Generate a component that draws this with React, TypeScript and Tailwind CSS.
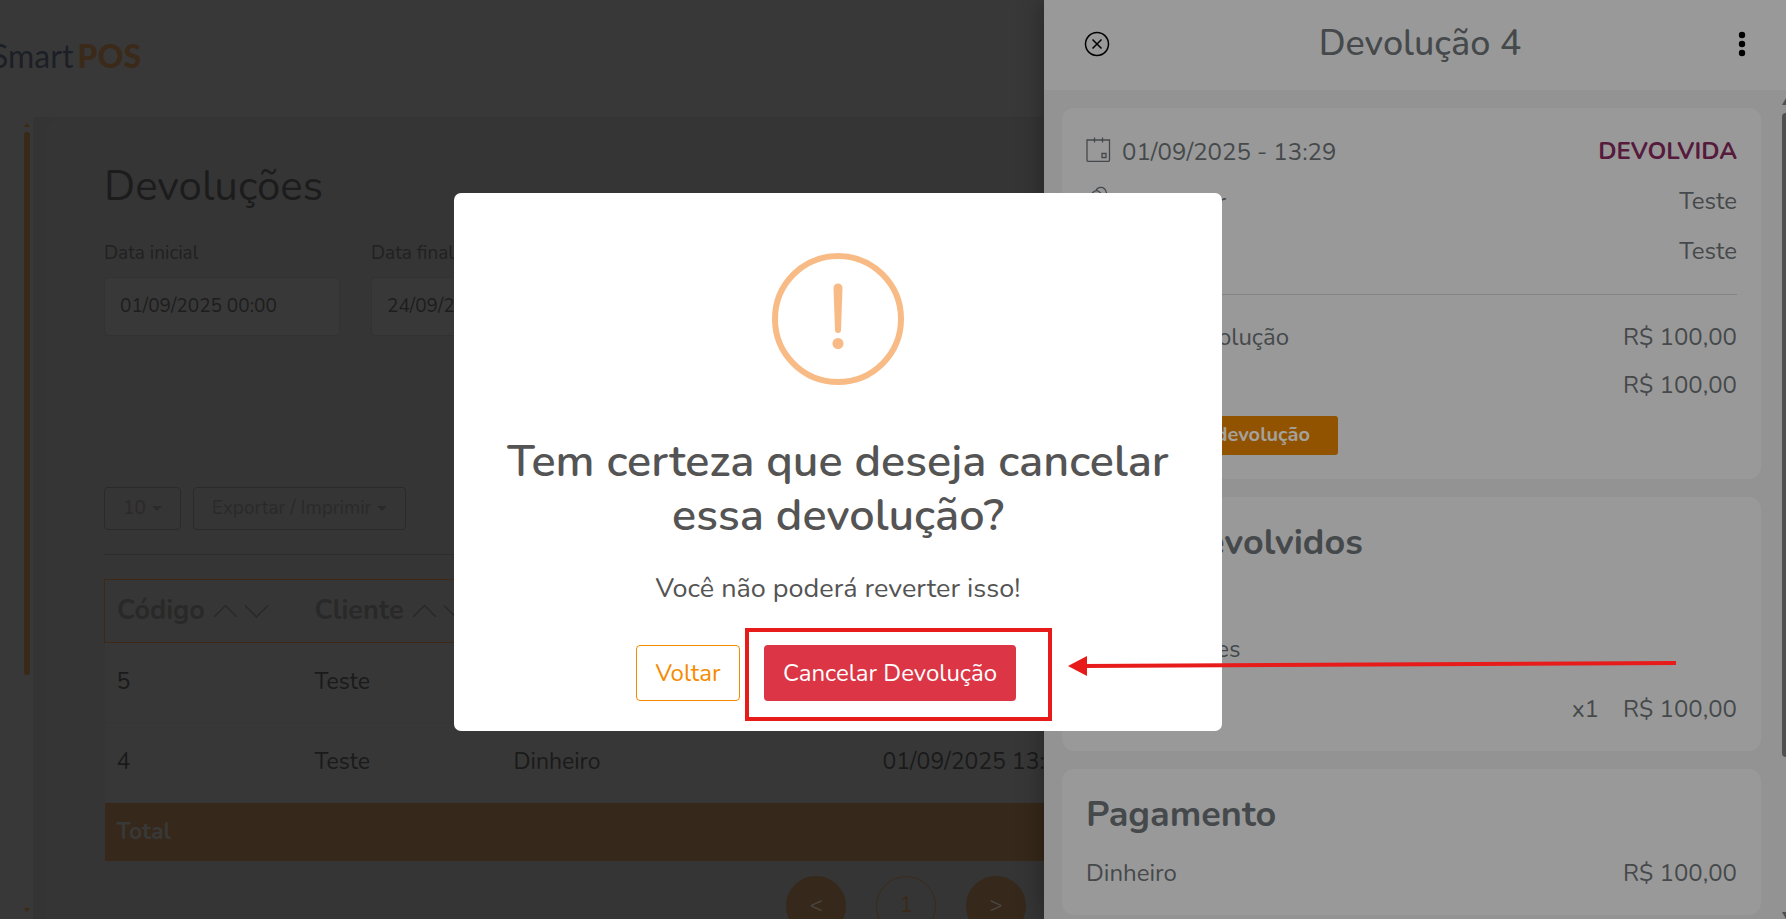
import type { ReactNode } from "react"

type Sale = {
    code: string
    client: string
    payment: string
    date: string
}

const sales: Sale[] = [
    { code: "5", client: "Teste", payment: "Dinheiro", date: "01/09/2025 13:32" },
    { code: "4", client: "Teste", payment: "Dinheiro", date: "01/09/2025 13:29" },
]

function SortArrows() {
    return (
        <svg width="56" height="14" viewBox="0 0 56 14" fill="none" stroke="currentColor" strokeWidth="1.5" className="shrink-0">
            <path d="M1 13 12.500 1.500 24 13" />
            <path d="M32 1.500 43.500 13 55 1.500" />
        </svg>
    )
}

function Caret() {
    return <span className="h-0 w-0 border-x-5 border-t-5 border-x-transparent border-t-[#2a2a2a]" />
}

function CloseIcon() {
    return (
        <svg width="26" height="26" viewBox="0 0 26 26" fill="none" stroke="#000" strokeWidth="1.500">
            <circle cx="13" cy="13" r="11.500" />
            <path d="M8.500 8.500l9 9M17.500 8.500l-9 9" />
        </svg>
    )
}

function DotsIcon() {
    return (
        <svg width="8" height="26" viewBox="0 0 8 26" fill="#000">
            <circle cx="4" cy="4" r="3.200" />
            <circle cx="4" cy="13" r="3.200" />
            <circle cx="4" cy="22" r="3.200" />
        </svg>
    )
}

function CalendarIcon() {
    return (
        <svg width="25" height="27" viewBox="0 0 25 27" fill="none" stroke="#45494b" strokeWidth="1.300">
            <path d="M1 5h22.500v20q0 1.500-1.500 1.500H2.500Q1 26.500 1 25zM8.500 2.500v5M16.500 2.500v5" />
            <path d="M16 18.500h4v4h-4z" />
        </svg>
    )
}

function UserIcon() {
    return (
        <svg width="25" height="27" viewBox="0 0 25 27" fill="none" stroke="#45494b" strokeWidth="1.300">
            <path d="M10 5.500C12 1 19 1 20.500 8v3q-1 6-7 6t-7-6V8q3-4 7-1c1.500 1 1 2 1 2" />
            <path d="M2 26c0-6 5-9 11-9s11 3 11 9" />
        </svg>
    )
}

function DateField({ id, label, value }: { id: string, label: string, value: string }) {
    return (
        <div className="flex w-[236px] flex-col gap-[10px]">
            <label htmlFor={id} className="text-[19px] leading-7 text-[#212121]">{label}</label>
            <input
                id={id}
                defaultValue={value}
                className="h-[59px] w-full rounded border border-[#323232] bg-[#383838] px-[15px] pb-[2px] text-[19px] text-[#1d1d1d] outline-none"
            />
        </div>
    )
}

function Sidebar() {
    return (
        <aside className="flex w-[33px] shrink-0 flex-col items-end bg-[#383838] pr-[3px]">
            <div className="flex h-full w-[6px] flex-col items-center pt-[6px] pb-[7px]">
                <span className="border-x-3 border-b-4 border-x-transparent border-b-[#3d2a15]" />
                <div className="mt-[5px] h-[543px] w-full rounded-full bg-[#392919]" />
                <span className="mt-auto border-x-3 border-t-4 border-x-transparent border-t-[#3d2a15]" />
            </div>
        </aside>
    )
}

function SalesPage() {
    return (
        <div className="flex h-full flex-col">
            <header className="flex h-[117px] shrink-0 items-center bg-[#383838] pb-[6px]">
                <div className="-ml-[9px] flex gap-1 font-['Lato',sans-serif] text-[32px] leading-none">
                    <span className="text-[#1c1f26]">Smart</span>
                    <span className="font-black text-[#3b2a19]">POS</span>
                </div>
            </header>
            <div className="flex min-h-0 flex-1">
                <Sidebar />
                <main className="min-w-0 flex-1 bg-[#343434] pt-[2px] pr-5 pl-[13px]">
                    <div className="h-full rounded-t-xl bg-[#353535] px-[58px] pt-10">
                        <h1 className="text-[42px] leading-[56px] text-[#1c1c1c]">Devoluções</h1>
                        <div className="mt-6 flex gap-[31px]">
                            <DateField id="start" label="Data inicial" value="01/09/2025 00:00" />
                            <DateField id="end" label="Data final" value="24/09/2025 23:59" />
                        </div>
                        <div className="mt-[151px] flex gap-3 text-[19px] text-[#2a2a2a]">
                            <button className="flex h-[43px] items-center gap-[6px] rounded-sm border border-[#2a2a2a] px-[18px]">10 <Caret /></button>
                            <button className="flex h-[43px] items-center gap-[6px] rounded-sm border border-[#2a2a2a] px-[18px]">Exportar / Imprimir <Caret /></button>
                        </div>
                        <hr className="mt-6 border-[#2d2d2d]" />
                        <table className="mt-6 w-full table-fixed border-collapse text-left text-[23px]">
                            <colgroup>
                                <col className="w-[198px]" />
                                <col className="w-[199px]" />
                                <col className="w-[369px]" />
                                <col />
                            </colgroup>
                            <thead>
                                <tr className="h-[63px] border border-[#3f2916] bg-[#363636] text-[27px] text-[#292929]">
                                    {["Código", "Cliente", "Pagamento", "Data"].map(title => (
                                        <th key={title} className="px-3 font-bold">
                                            <div className="flex items-center gap-2">{title} <SortArrows /></div>
                                        </th>
                                    ))}
                                </tr>
                            </thead>
                            <tbody>
                                {sales.map(sale => (
                                    <tr key={sale.code} className="h-20 border-b border-[#353535] bg-[#373737] text-[#1a1a1a]">
                                        <td className="px-3">{sale.code}</td>
                                        <td className="px-3">{sale.client}</td>
                                        <td className="px-3">{sale.payment}</td>
                                        <td className="px-3">{sale.date}</td>
                                    </tr>
                                ))}
                            </tbody>
                            <tfoot>
                                <tr className="h-[58px] bg-[#36281a] text-[#383838]">
                                    <th colSpan={4} className="px-3 font-bold">Total</th>
                                </tr>
                            </tfoot>
                        </table>
                        <nav className="mt-[15px] flex justify-center gap-[30px] text-[22px]">
                            <button className="h-[60px] w-[60px] rounded-full bg-[#36281a] text-[#4a4540]">&lt;</button>
                            <button className="h-[60px] w-[60px] rounded-full border border-[#3b2a19] text-[#3b2a19]">1</button>
                            <button className="h-[60px] w-[60px] rounded-full bg-[#36281a] text-[#4a4540]">&gt;</button>
                        </nav>
                    </div>
                </main>
            </div>
        </div>
    )
}

function Row({ label, value }: { label: string, value: string }) {
    return (
        <div className="flex items-start">
            <span>{label}</span>
            <span className="ml-auto">{value}</span>
        </div>
    )
}

function IconRow({ icon, label, children }: { icon: ReactNode, label: string, children: ReactNode }) {
    return (
        <div className="flex items-start gap-[11px]">
            {icon}
            <span className="leading-[34px]">{label}</span>
            <span className="ml-auto">{children}</span>
        </div>
    )
}

function Drawer() {
    return (
        <aside className="absolute inset-y-0 right-0 flex w-[742px] max-w-full flex-col bg-[#939393] text-[24px] leading-8 text-[#45494b] shadow-[0_0_24px_rgba(0,0,0,0.35)]">
            <header className="flex h-[90px] shrink-0 items-center justify-between bg-[#999999] pr-10 pb-[3px] pl-10">
                <button aria-label="Fechar"><CloseIcon /></button>
                <h2 className="text-[36px] font-medium">Devolução 4</h2>
                <button aria-label="Mais opções" className="flex w-4 justify-end"><DotsIcon /></button>
            </header>
            <div className="flex min-h-0 flex-1">
                <div className="flex min-w-0 flex-1 flex-col gap-[18px] pt-[18px] pr-[21px] pl-[18px]">
                    <section className="h-[371px] shrink-0 rounded-xl bg-[#999999] px-6 pt-[27px]">
                        <div className="flex flex-col gap-4">
                            <IconRow icon={<CalendarIcon />} label="01/09/2025 - 13:29">
                                <strong className="font-bold text-[#561a3c]">DEVOLVIDA</strong>
                            </IconRow>
                            <IconRow icon={<UserIcon />} label="Vendedor">Teste</IconRow>
                            <IconRow icon={<UserIcon />} label="Cliente">Teste</IconRow>
                        </div>
                        <hr className="mt-[25px] border-[#828383]" />
                        <div className="mt-[26px] flex flex-col gap-4">
                            <Row label="Total da devolução" value="R$ 100,00" />
                            <Row label="Valor pago" value="R$ 100,00" />
                        </div>
                        <button className="mt-[15px] h-[39px] w-[252px] rounded-[3px] bg-[#915300] pr-7 pb-[2px] text-right text-[20px] font-bold text-[#a5a19c]">Imprimir devolução</button>
                    </section>
                    <section className="h-[254px] shrink-0 rounded-xl bg-[#999999] px-6 pt-[26px]">
                        <h3 className="text-[36px] leading-10 font-bold">Itens Devolvidos</h3>
                        <p className="mt-[70px]">Sem variações</p>
                        <div className="mt-7 flex items-center gap-6">
                            <span>Teste</span>
                            <span className="ml-auto">x1</span>
                            <span>R$ 100,00</span>
                        </div>
                    </section>
                    <section className="h-[146px] shrink-0 rounded-xl bg-[#999999] px-6 pt-[26px]">
                        <h3 className="text-[36px] leading-10 font-bold">Pagamento</h3>
                        <div className="mt-[22px]">
                            <Row label="Dinheiro" value="R$ 100,00" />
                        </div>
                    </section>
                </div>
                <div className="flex w-[4px] flex-col overflow-hidden pt-2">
                    <span className="h-[7px] w-0 border-b-7 border-l-4 border-b-[#4f5151] border-l-transparent" />
                    <div className="mt-2 h-[644px] w-full rounded-l bg-[#4f5151]" />
                    <span className="mt-auto h-[7px] w-0 border-t-7 border-l-4 border-t-[#4f5151] border-l-transparent" />
                </div>
            </div>
        </aside>
    )
}

function ConfirmDialog() {
    return (
        <div className="absolute inset-0 flex items-center justify-center pt-[5px] pr-[110px]">
            <div role="dialog" aria-labelledby="confirm-title" className="relative flex w-[768px] flex-col items-center rounded-[7px] bg-white px-10 pt-[60px] pb-[30px] text-[#545454]">
                <svg width="132" height="132" viewBox="0 0 132 132" fill="#f8bb86">
                    <circle cx="66" cy="66" r="63" fill="none" stroke="#f8bb86" strokeWidth="6" />
                    <path d="M61.500 35a4.500 4.500 0 0 1 9 0L69 77a3 3 0 0 1-6 0z" />
                    <circle cx="66" cy="90.500" r="5.500" />
                </svg>
                <h2 id="confirm-title" className="mt-[50px] text-center text-[45px] leading-[54px] font-semibold">Tem certeza que deseja cancelar essa devolução?</h2>
                <p className="mt-7 text-[27px] leading-9">Você não poderá reverter isso!</p>
                <div className="mt-[38px] flex gap-6 pr-6 text-[24px]">
                    <button className="h-14 w-[104px] rounded border border-[#f58b00] text-[#f58b00]">Voltar</button>
                    <button className="h-14 w-[252px] rounded bg-[#dc3545] text-white">Cancelar Devolução</button>
                </div>
                {/* highlight around the confirm button, with its arrow */}
                <svg width="932" height="94" viewBox="0 0 932 94" fill="none" stroke="#e81b1b" strokeWidth="4" className="pointer-events-none absolute bottom-[9px] left-[291px] max-w-none">
                    <path d="M2 2h303v89H2z" />
                    <path d="M338 38 931 35" />
                    <path d="M323 38 342 28v20z" fill="#e81b1b" stroke="none" />
                </svg>
            </div>
        </div>
    )
}

function App() {
    return (
        <div className="relative h-screen overflow-hidden bg-[#353535] font-['Nunito','Open_Sans',sans-serif]">
            <SalesPage />
            <Drawer />
            <ConfirmDialog />
        </div>
    )
}

export default App
